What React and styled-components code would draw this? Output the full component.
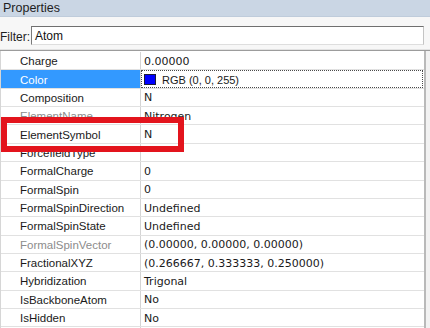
import styled, { createGlobalStyle } from "styled-components";

const GlobalStyle = createGlobalStyle`
  html, body {
    margin: 0;
    padding: 0;
    background: #ffffff;
  }
  * {
    box-sizing: border-box;
  }
`;

const Panel = styled.div`
  position: relative;
  width: 430px;
  height: 328px;
  overflow: hidden;
  display: flex;
  flex-direction: column;
  font-family: "Liberation Sans", Arial, sans-serif;
  background: #f7f7f7;
`;

const TitleBar = styled.div`
  height: 17px;
  flex: none;
  display: flex;
  align-items: center;
  padding-left: 3px;
  background: #cad6e4;
  border-bottom: 1px solid #bfccdb;
  color: #1e1e1e;
  font-size: 12.5px;
`;

const FilterRow = styled.div`
  height: 33px;
  flex: none;
  display: flex;
  align-items: flex-start;
  padding-top: 9px;
  gap: 2px;
  border-bottom: 1px solid #e2e2e2;
`;

const FilterLabel = styled.span`
  margin-top: 4px;
  font-size: 12px;
  color: #1e1e1e;
  width: 29px;
  white-space: nowrap;
`;

const FilterInput = styled.div`
  width: 393px;
  height: 19px;
  display: flex;
  align-items: center;
  padding-left: 3px;
  background: #ffffff;
  border-top: 1px solid #6f6f6f;
  border-left: 1px solid #7a7a7a;
  border-right: 1px solid #c4c4c4;
  border-bottom: 1px solid #dedede;
  font-size: 12px;
  color: #111;
`;

const Body = styled.div`
  flex: 1;
  display: flex;
  border-top: 1px solid #9c9c9c;
`;

const Grid = styled.div`
  width: 426px;
  flex: none;
  background: #ffffff;
  border-right: 2px solid #b9b9b9;
  border-left: 1px solid #d6d6d6;
  padding-top: 1px;
`;

const ScrollStrip = styled.div`
  flex: 1;
  background: #f2f2f2;
`;

const Row = styled.div`
  display: flex;
  height: 18.36px;
  border-bottom: 1px solid #e1e1e1;
`;

const Label = styled.div`
  width: 140px;
  flex: none;
  display: flex;
  align-items: center;
  padding-left: 19px;
  padding-top: 1px;
  border-right: 1px solid #d4d4d4;
  font-size: 11.5px;
  white-space: nowrap;
  overflow: hidden;
  background: ${(p) => (p.$selected ? "#3399ff" : "transparent")};
  color: ${(p) => (p.$selected ? "#ffffff" : p.$readonly ? "#8c8c8c" : "#1a1a1a")};
`;

const Value = styled.div`
  flex: 1;
  display: flex;
  align-items: center;
  gap: 6px;
  padding-left: 3px;
  padding-top: 1px;
  font-family: "DejaVu Sans", Verdana, sans-serif;
  font-size: 11px;
  color: #1a1a1a;
  white-space: nowrap;
  overflow: hidden;
  margin-right: 1px;
  outline: ${(p) => (p.$focused ? "1px dotted #4a4a4a" : "none")};
  outline-offset: -1px;
`;

const Swatch = styled.span`
  width: 12px;
  height: 11px;
  background: #0000ff;
  border: 1px solid #1b1b3a;
  flex: none;
`;

const ColorText = styled.span`
  font-family: "Liberation Sans", Arial, sans-serif;
  font-size: 11px;
`;

const Highlight = styled.div`
  position: absolute;
  left: 1px;
  top: 117px;
  width: 183px;
  height: 35px;
  border: 6px solid #e3141d;
  pointer-events: none;
`;

const properties = [
  { name: "Charge", value: "0.00000" },
  { name: "Color", color: true, selected: true },
  { name: "Composition", value: "N" },
  { name: "ElementName", value: "Nitrogen", readonly: true },
  { name: "ElementSymbol", value: "N" },
  { name: "ForcefieldType", value: "" },
  { name: "FormalCharge", value: "0" },
  { name: "FormalSpin", value: "0" },
  { name: "FormalSpinDirection", value: "Undefined" },
  { name: "FormalSpinState", value: "Undefined" },
  { name: "FormalSpinVector", value: "(0.00000, 0.00000, 0.00000)", readonly: true },
  { name: "FractionalXYZ", value: "(0.266667, 0.333333, 0.250000)" },
  { name: "Hybridization", value: "Trigonal" },
  { name: "IsBackboneAtom", value: "No" },
  { name: "IsHidden", value: "No" },
  { name: "", value: "" },
];

export default function App() {
  return (
    <>
      <GlobalStyle />
      <Panel>
        <TitleBar>Properties</TitleBar>
        <FilterRow>
          <FilterLabel>Filter:</FilterLabel>
          <FilterInput>Atom</FilterInput>
        </FilterRow>
        <Body>
          <Grid>
            {properties.map((p, i) => (
              <Row key={i}>
                <Label $selected={p.selected} $readonly={p.readonly}>
                  {p.name}
                </Label>
                <Value $focused={p.selected}>
                  {p.color ? (
                    <>
                      <Swatch />
                      <ColorText>RGB (0, 0, 255)</ColorText>
                    </>
                  ) : (
                    p.value
                  )}
                </Value>
              </Row>
            ))}
          </Grid>
          <ScrollStrip />
        </Body>
        <Highlight />
      </Panel>
    </>
  );
}
